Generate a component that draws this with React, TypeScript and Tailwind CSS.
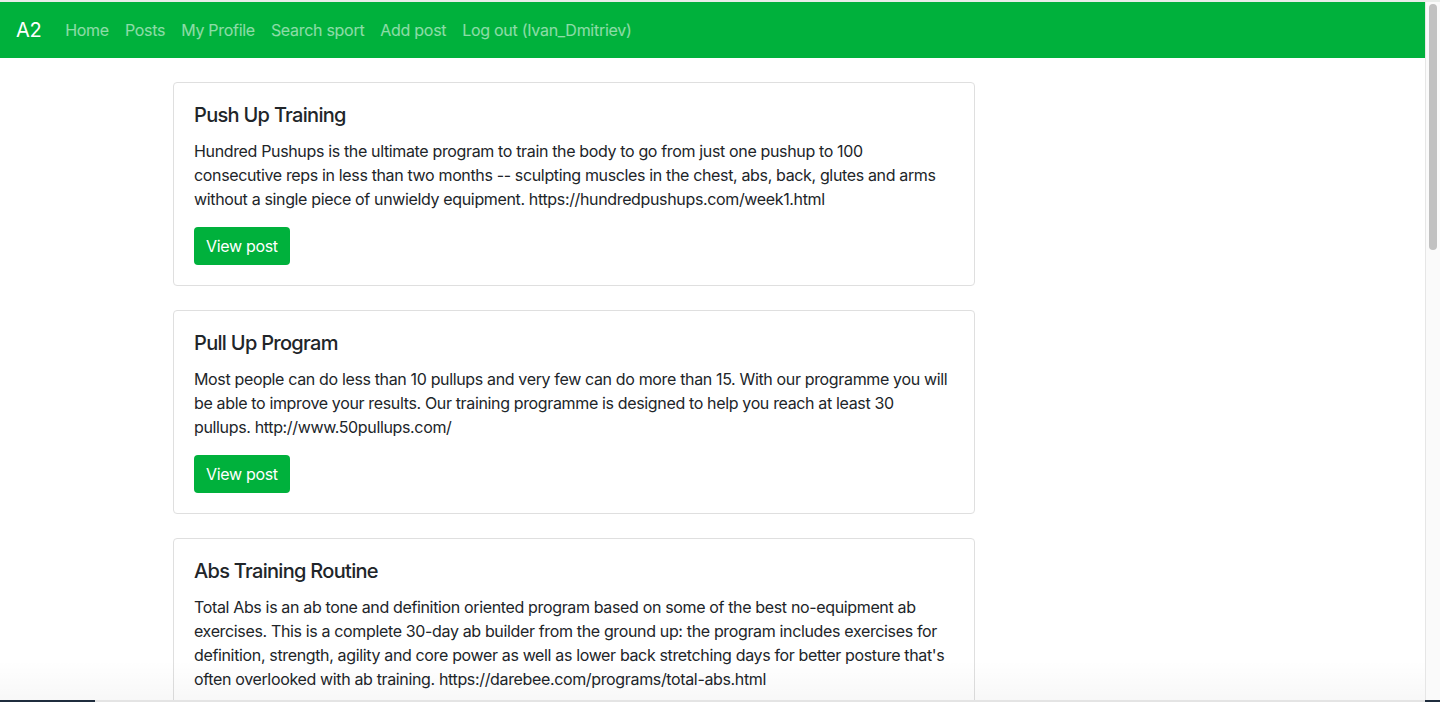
import React from 'react';

const FONT = { fontFamily: 'Inter, "Helvetica Neue", Arial, "Noto Sans", sans-serif' };

const POSTS = [
  {
    title: 'Push Up Training',
    body: 'Hundred Pushups is the ultimate program to train the body to go from just one pushup to 100 consecutive reps in less than two months -- sculpting muscles in the chest, abs, back, glutes and arms without a single piece of unwieldy equipment. https://hundredpushups.com/week1.html',
  },
  {
    title: 'Pull Up Program',
    body: 'Most people can do less than 10 pullups and very few can do more than 15. With our programme you will be able to improve your results. Our training programme is designed to help you reach at least 30 pullups. http://www.50pullups.com/',
  },
  {
    title: 'Abs Training Routine',
    body: "Total Abs is an ab tone and definition oriented program based on some of the best no-equipment ab exercises. This is a complete 30-day ab builder from the ground up: the program includes exercises for definition, strength, agility and core power as well as lower back stretching days for better posture that's often overlooked with ab training. https://darebee.com/programs/total-abs.html",
  },
];

const LINKS = ['Home', 'Posts', 'My Profile', 'Search sport', 'Add post', 'Log out (Ivan_Dmitriev)'];

function PostCard({ title, body }: { title: string; body: string }) {
  return (
    <div className="mb-6 rounded-[4px] border border-[#dfdfdf] bg-white p-5">
      <h5 className="mb-3 text-[20px] font-medium leading-[24px] tracking-[-0.035em] text-[#212529]">{title}</h5>
      <p className="mb-4 text-[16px] leading-[24px] tracking-[-0.022em] text-[#212529]">{body}</p>
      <button className="rounded-[4px] bg-[#00b13c] px-3 py-[7px] text-[16px] leading-[24px] tracking-[-0.02em] text-white">
        View post
      </button>
    </div>
  );
}

export default function App() {
  return (
    <div className="relative h-[702px] w-[1440px] overflow-hidden bg-white" style={FONT}>
      <div className="h-[2px] bg-[#e9ecea]" />
      <div className="flex h-[702px] w-[1440px]">
        <div className="w-[1425px]">
          <nav className="flex h-[56px] items-center bg-[#00b13c] px-4">
            <span className="mr-4 text-[20px] leading-[30px] tracking-[-0.02em] text-white">A2</span>
            <ul className="flex">
              {LINKS.map((l) => (
                <li key={l} className="px-2 text-[16px] leading-[24px] tracking-[-0.018em] text-white/55">
                  {l}
                </li>
              ))}
            </ul>
          </nav>
          <div className="ml-[173px] w-[802px] pt-6">
            {POSTS.map((p) => (
              <PostCard key={p.title} title={p.title} body={p.body} />
            ))}
          </div>
        </div>
        <div className="relative w-[15px] border-l border-[#e6e6e6] bg-[#fafafa]">
          <div className="mx-auto mt-[2px] h-[246px] w-[8px] rounded-full bg-[#c1c1c1]" />
        </div>
      </div>
      <div className="pointer-events-none absolute bottom-[2px] left-0 h-[40px] w-[1425px] bg-gradient-to-b from-transparent to-black/[0.03]" />
      <div className="absolute bottom-0 left-0 h-[2px] w-[95px] bg-[#1f2d3d]" />
      <div className="absolute bottom-0 left-[95px] h-[2px] w-[1330px] bg-[#e4e4e4]" />
      <div className="absolute bottom-0 right-0 h-[2px] w-[15px] bg-[#1f2d3d]" />
    </div>
  );
}
